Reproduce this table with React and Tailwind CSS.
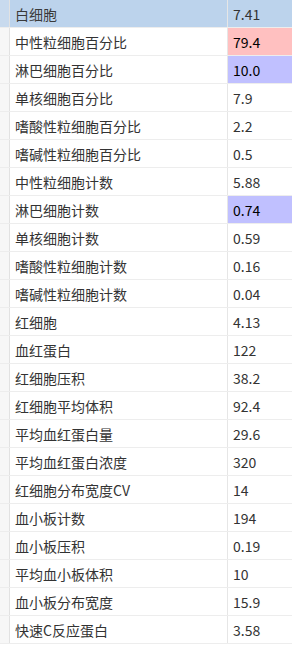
import React from 'react';

const rows = [
  ['白细胞', '7.41', ''],
  ['中性粒细胞百分比', '79.4', 'high'],
  ['淋巴细胞百分比', '10.0', 'low'],
  ['单核细胞百分比', '7.9', ''],
  ['嗜酸性粒细胞百分比', '2.2', ''],
  ['嗜碱性粒细胞百分比', '0.5', ''],
  ['中性粒细胞计数', '5.88', ''],
  ['淋巴细胞计数', '0.74', 'low'],
  ['单核细胞计数', '0.59', ''],
  ['嗜酸性粒细胞计数', '0.16', ''],
  ['嗜碱性粒细胞计数', '0.04', ''],
  ['红细胞', '4.13', ''],
  ['血红蛋白', '122', ''],
  ['红细胞压积', '38.2', ''],
  ['红细胞平均体积', '92.4', ''],
  ['平均血红蛋白量', '29.6', ''],
  ['平均血红蛋白浓度', '320', ''],
  ['红细胞分布宽度CV', '14', ''],
  ['血小板计数', '194', ''],
  ['血小板压积', '0.19', ''],
  ['平均血小板体积', '10', ''],
  ['血小板分布宽度', '15.9', ''],
  ['快速C反应蛋白', '3.58', ''],
];

export default function App() {
  return (
    <div className="w-[292px] h-[656px] bg-white overflow-hidden text-[14px] text-[#333]" style={{ fontFamily: '"Noto Sans CJK SC", "Noto Sans", sans-serif' }}>
      {rows.map(([name, value, flag], i) => {
        const selected = i === 0;
        let valueBg = selected ? 'bg-[#bcd3ec]' : 'bg-white';
        if (flag === 'high') valueBg = 'bg-[#ffc0c0] text-black';
        if (flag === 'low') valueBg = 'bg-[#c0c0ff] text-black';
        return (
          <div key={i} className="flex h-[28px] border-b border-[#ededed]">
            <div className={`w-[10px] border-r border-[#e2e2e2] ${selected ? 'bg-[#c8daee]' : 'bg-[#f7f7f7]'}`}></div>
            <div className={`w-[218px] border-r border-[#e6e6e6] pl-[5px] flex items-center leading-none ${selected ? 'bg-[#bcd3ec] text-[#3a3a3a]' : ''}`}>
              {name}
            </div>
            <div className={`flex-1 pl-[5px] flex items-center leading-none ${valueBg}`}>
              {value}
            </div>
          </div>
        );
      })}
    </div>
  );
}
